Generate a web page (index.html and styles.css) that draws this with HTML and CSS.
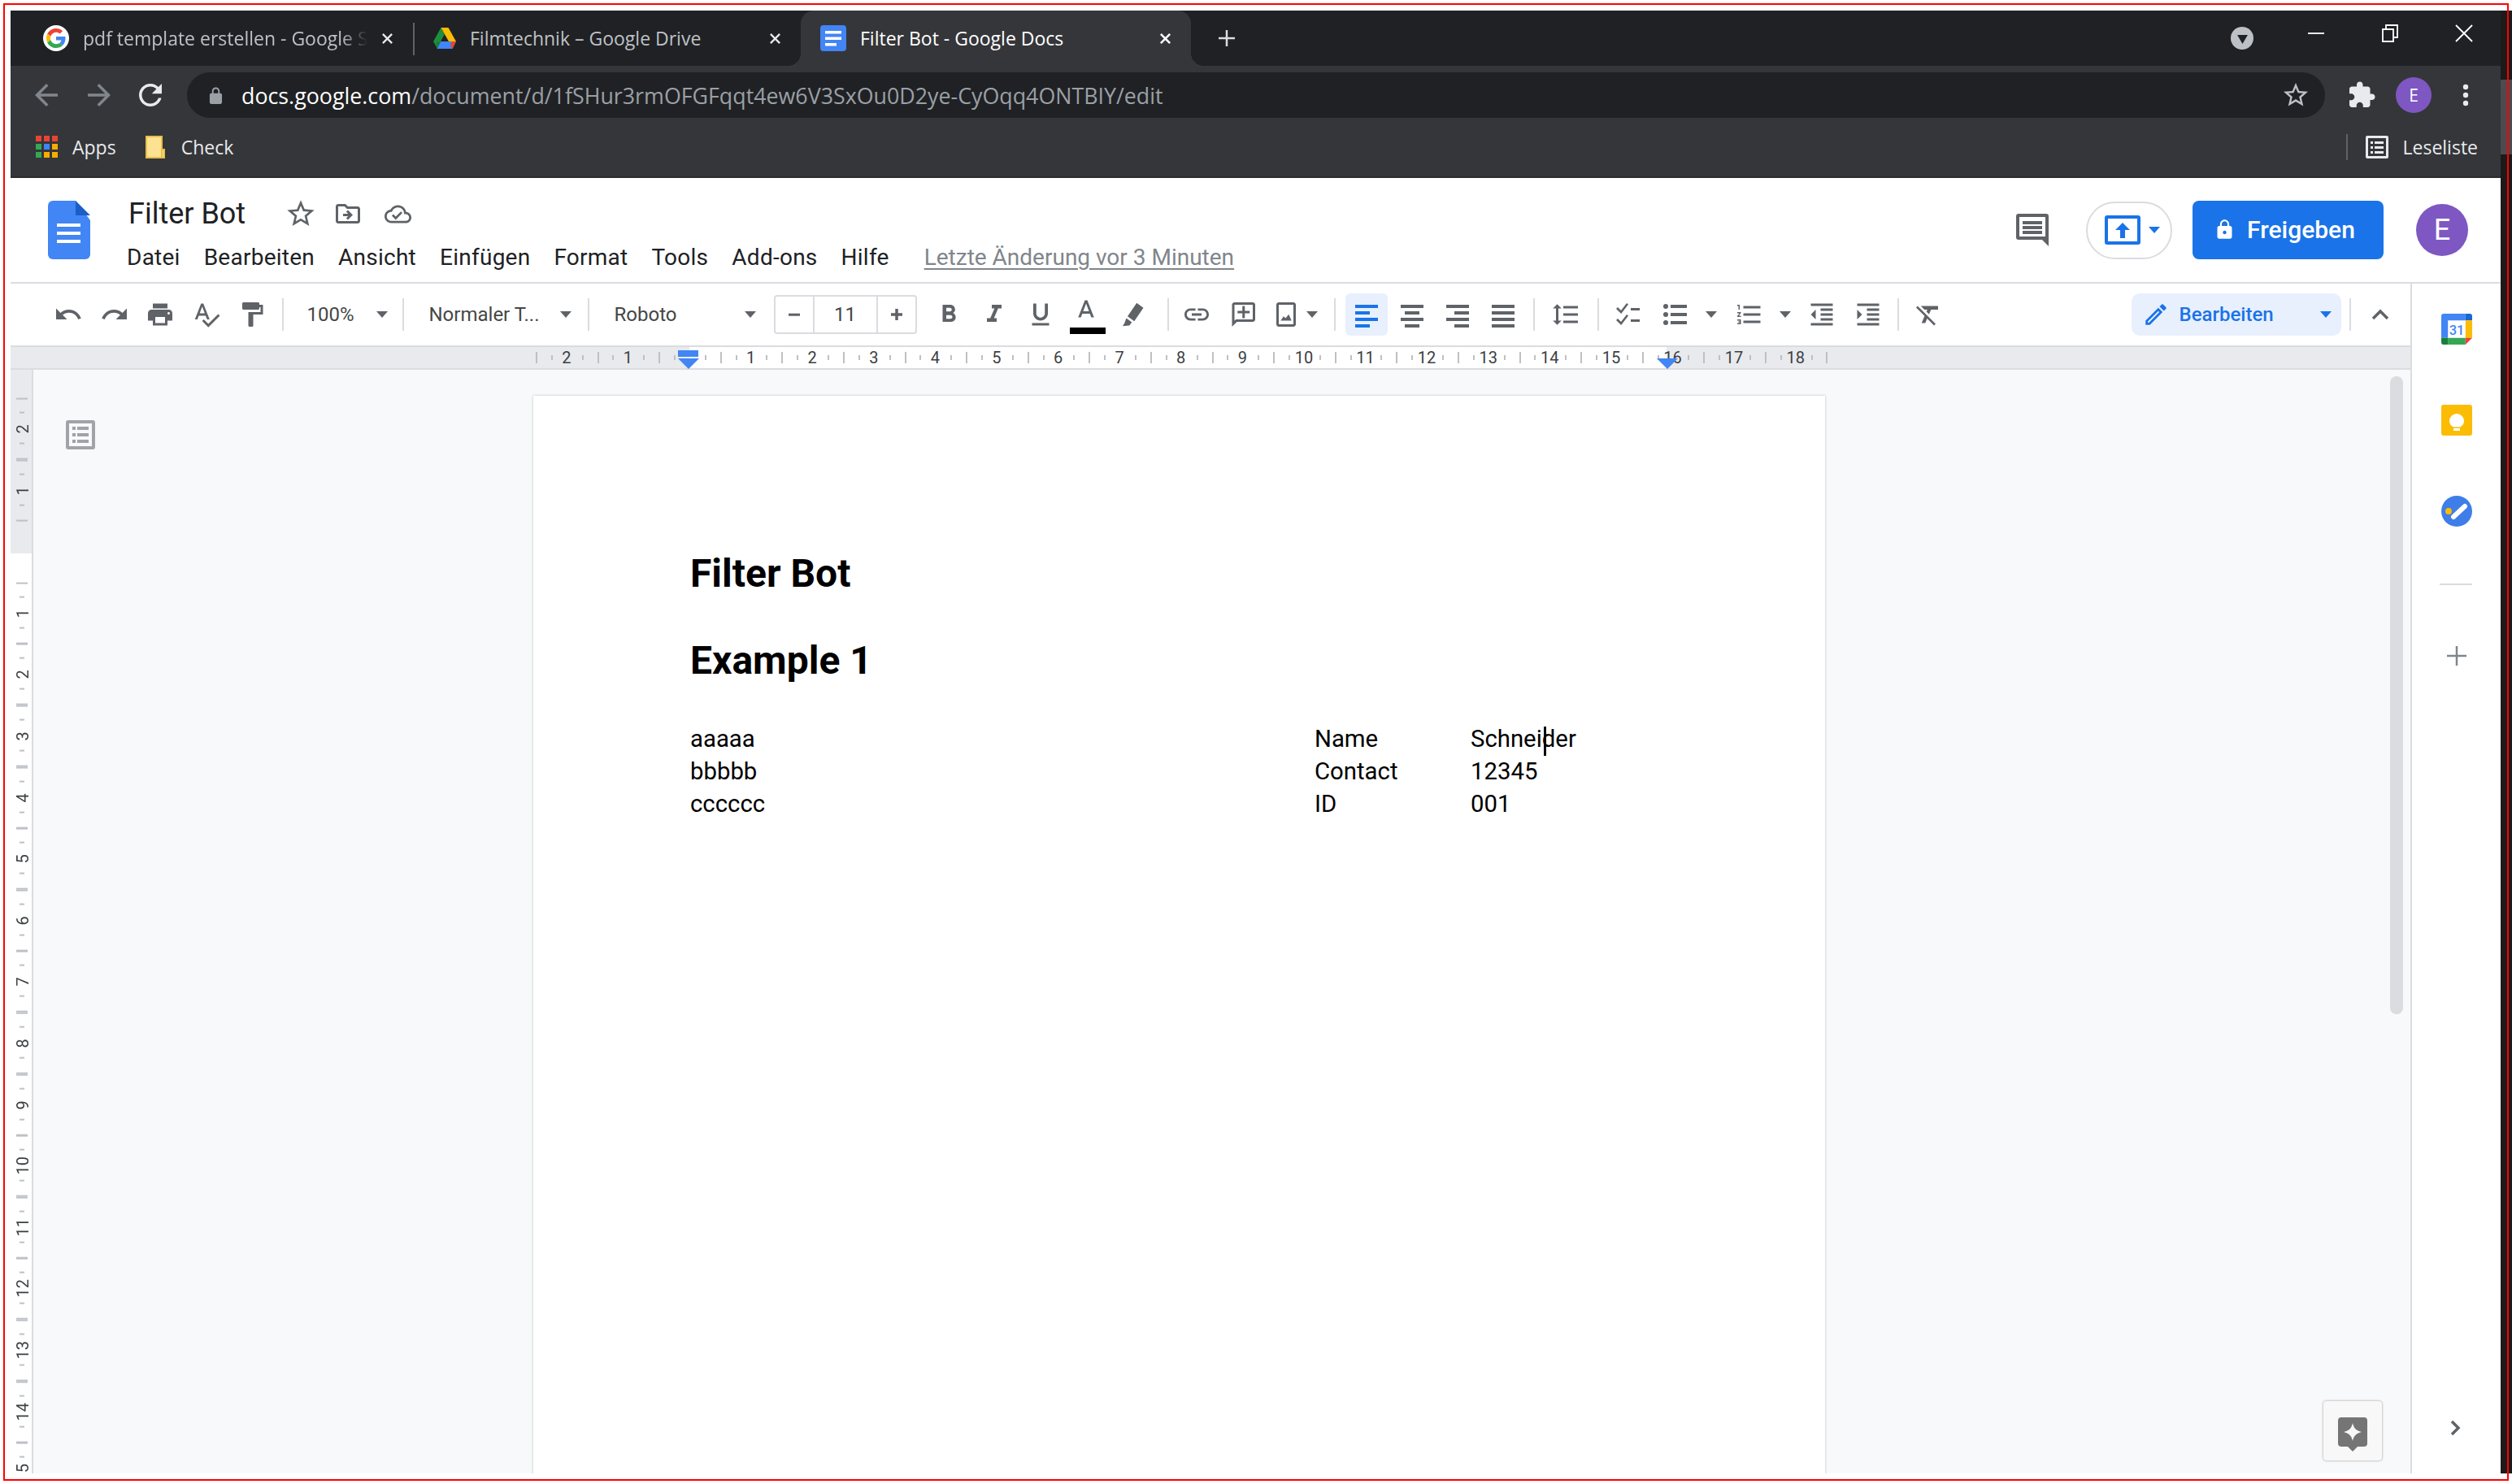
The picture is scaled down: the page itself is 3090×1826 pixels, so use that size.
FILE: index.html
```html
<!DOCTYPE html>
<html lang="en">
<head>
    <meta charset="UTF-8">
    <title>Filter Bot - Google Docs</title>
    <link rel="stylesheet" href="styles.css">
</head>
<body>
    <div class="window">
        <!-- browser tabs -->
        <div class="tabstrip">
            <div class="tab tab-one">
                <span class="favicon-round">
                    <svg class="fav-g" viewBox="0 0 48 48"><path fill="#EA4335" d="M24 9.5c3.54 0 6.71 1.22 9.21 3.6l6.85-6.85C35.9 2.38 30.47 0 24 0 14.62 0 6.51 5.38 2.56 13.22l7.98 6.19C12.43 13.72 17.74 9.5 24 9.5z"/><path fill="#4285F4" d="M46.98 24.55c0-1.57-.15-3.09-.38-4.55H24v9.02h12.94c-.58 2.96-2.26 5.48-4.78 7.18l7.73 6c4.51-4.18 7.09-10.36 7.09-17.65z"/><path fill="#FBBC05" d="M10.53 28.59c-.48-1.45-.76-2.99-.76-4.59s.27-3.14.76-4.59l-7.98-6.19C.92 16.46 0 20.12 0 24c0 3.88.92 7.54 2.56 10.78l7.97-6.19z"/><path fill="#34A853" d="M24 48c6.48 0 11.93-2.13 15.89-5.81l-7.73-6c-2.15 1.45-4.92 2.3-8.16 2.3-6.26 0-11.57-4.22-13.47-9.91l-7.98 6.19C6.51 42.62 14.62 48 24 48z"/></svg>
                </span>
                <span class="tab-title tab-title-fade">pdf template erstellen - Google S</span>
                <svg class="tab-x" viewBox="0 0 16 16"><path d="M2 2l12 12M14 2L2 14"/></svg>
            </div>
            <div class="tab tab-two">
                <svg class="fav-drive" viewBox="0 0 28 27"><path fill="#1e8e3e" d="M9.5 0L0 17l4.5 8L14 8z"/><path fill="#fbbc04" d="M9.5 0h9L28 17h-9z"/><path fill="#4285f4" d="M9 17h19l-4.5 9H4.5z"/><path fill="#ea4335" d="M23 17h5l-4.5 9-2.5-4z"/><path fill="#188038" d="M4.5 26L9 17H5l-2 4z"/></svg>
                <span class="tab-title">Filmtechnik – Google Drive</span>
                <svg class="tab-x" viewBox="0 0 16 16"><path d="M2 2l12 12M14 2L2 14"/></svg>
            </div>
            <div class="tab tab-active">
                <svg class="fav-docs" viewBox="0 0 32 32"><rect width="32" height="32" rx="4" fill="#4285f4"/><path fill="#fff" d="M6 7h20v3.5H6zM6 14.500h20V18H6zM6 22h14v3.500H6z"/></svg>
                <span class="tab-title">Filter Bot - Google Docs</span>
                <svg class="tab-x tab-x-active" viewBox="0 0 16 16"><path d="M2 2l12 12M14 2L2 14"/></svg>
            </div>
            <svg class="newtab" viewBox="0 0 24 24"><path d="M12 2v20M2 12h20"/></svg>
            <div class="win-controls">
                <span class="tabsearch"><svg viewBox="0 0 14 12"><path d="M0 0h14L7 12z"/></svg></span>
                <span class="winbtn"><svg viewBox="0 0 22 22"><path d="M1 11h20"/></svg></span>
                <span class="winbtn"><svg viewBox="0 0 22 22"><path d="M2 6h13v15H2zM6 6V1h14v15h-5"/></svg></span>
                <span class="winbtn"><svg viewBox="0 0 22 22"><path d="M1 1l20 20M21 1L1 21"/></svg></span>
            </div>
        </div>

        <!-- address bar -->
        <div class="navbar">
            <span class="navbtn nav-dim"><svg viewBox="0 0 24 24"><path d="M20 11H7.830l5.590-5.590L12 4l-8 8 8 8 1.410-1.410L7.830 13H20v-2z"/></svg></span>
            <span class="navbtn nav-dim"><svg viewBox="0 0 24 24"><path d="M12 4l-1.410 1.410L16.170 11H4v2h12.170l-5.580 5.590L12 20l8-8z"/></svg></span>
            <span class="navbtn nav-reload"><svg viewBox="0 0 24 24"><path d="M17.650 6.350C16.200 4.900 14.210 4 12 4c-4.420 0-7.990 3.580-7.990 8s3.570 8 7.990 8c3.730 0 6.840-2.550 7.730-6h-2.080c-.82 2.330-3.040 4-5.650 4-3.310 0-6-2.690-6-6s2.690-6 6-6c1.660 0 3.140.69 4.220 1.780L13 11h7V4l-2.350 2.350z"/></svg></span>
            <div class="omnibox">
                <svg class="omni-lock" viewBox="0 0 18 22"><path d="M15 8h-1V5.500C14 2.700 11.800.5 9 .5S4 2.700 4 5.500V8H3c-1.100 0-2 .9-2 2v10c0 1.100.9 2 2 2h12c1.100 0 2-.9 2-2V10c0-1.100-.9-2-2-2zM6 8V5.500C6 3.800 7.300 2.500 9 2.500s3 1.300 3 3V8H6z"/></svg>
                <span class="url"><span class="url-host">docs.google.com</span>/document/d/1fSHur3rmOFGFqqt4ew6V3SxOu0D2ye-CyOqq4ONTBIY/edit</span>
                <svg class="omni-star" viewBox="0 0 24 24"><path d="M22 9.240l-7.190-.62L12 2 9.190 8.630 2 9.240l5.460 4.730L5.820 21 12 17.270 18.180 21l-1.630-7.030L22 9.240zM12 15.400l-3.760 2.270 1-4.280-3.320-2.880 4.380-.38L12 6.100l1.710 4.040 4.380.38-3.320 2.880 1 4.280L12 15.400z"/></svg>
            </div>
            <div class="nav-right">
                <svg class="puzzle" viewBox="0 0 24 24"><path d="M20.500 11H19V7c0-1.100-.9-2-2-2h-4V3.500C13 2.120 11.880 1 10.500 1S8 2.120 8 3.500V5H4c-1.100 0-1.990.9-1.990 2v3.800H3.500c1.490 0 2.700 1.210 2.700 2.700s-1.210 2.700-2.700 2.700H2V20c0 1.100.9 2 2 2h3.800v-1.500c0-1.490 1.210-2.700 2.700-2.700 1.490 0 2.700 1.210 2.700 2.700V22H17c1.100 0 2-.9 2-2v-4h1.500c1.380 0 2.500-1.120 2.500-2.500S21.880 11 20.500 11z"/></svg>
                <span class="nav-avatar">E</span>
                <svg class="nav-dots" viewBox="0 0 8 28"><circle cx="4" cy="4" r="3.200"/><circle cx="4" cy="14" r="3.200"/><circle cx="4" cy="24" r="3.200"/></svg>
            </div>
        </div>

        <!-- bookmarks -->
        <div class="bookmarks">
            <svg class="apps-grid" viewBox="0 0 27 27">
                <rect width="7" height="7" fill="#ea4335"/><rect x="10" width="7" height="7" fill="#ea4335"/><rect x="20" width="7" height="7" fill="#ea4335"/>
                <rect y="10" width="7" height="7" fill="#34a853"/><rect x="10" y="10" width="7" height="7" fill="#4285f4"/><rect x="20" y="10" width="7" height="7" fill="#f9ab00"/>
                <rect y="20" width="7" height="7" fill="#34a853"/><rect x="10" y="20" width="7" height="7" fill="#f9ab00"/><rect x="20" y="20" width="7" height="7" fill="#f9ab00"/>
            </svg>
            <span class="bm-label bm-apps">Apps</span>
            <svg class="bm-folder" viewBox="0 0 24 28"><path fill="#fde293" stroke="#e8c04a" stroke-width="2" d="M1 1h19v26H1z"/><path fill="#fde293" stroke="#e8c04a" stroke-width="2" d="M20 17h3v10h-3z"/></svg>
            <span class="bm-label">Check</span>
            <span class="bm-sep"></span>
            <svg class="bm-list" viewBox="0 0 28 28"><path fill="#e8eaed" d="M2 0h24a2 2 0 0 1 2 2v24a2 2 0 0 1-2 2H2a2 2 0 0 1-2-2V2a2 2 0 0 1 2-2zm1 3v22h22V3zM6 7h3v3H6zm5 0h11v3H11zM6 13h3v3H6zm5 0h11v3H11zM6 19h3v3H6zm5 0h11v3H11z"/></svg>
            <span class="bm-label">Leseliste</span>
        </div>

        <!-- docs header -->
        <header class="docs-head">
            <svg class="docs-logo" viewBox="0 0 52 72"><path fill="#4285f4" d="M6 0h28l18 24v42a6 6 0 0 1-6 6H6a6 6 0 0 1-6-6V6a6 6 0 0 1 6-6z"/><path fill="#1a5fc8" d="M34 0l18 18v0H34z"/><path fill="#fff" d="M11 28h29v4H11zM11 38h29v4H11zM11 48h29v4H11z"/></svg>
            <div class="head-text">
                <div class="title-row">
                    <span class="doc-title">Filter Bot</span>
                    <svg class="title-icon star" viewBox="0 0 24 24"><path d="M22 9.240l-7.190-.62L12 2 9.190 8.630 2 9.240l5.460 4.730L5.820 21 12 17.270 18.180 21l-1.630-7.030L22 9.240zM12 15.400l-3.760 2.270 1-4.280-3.320-2.880 4.380-.38L12 6.100l1.710 4.040 4.380.38-3.320 2.880 1 4.280L12 15.400z"/></svg>
                    <svg class="title-icon folder" viewBox="0 0 24 24"><path d="M20 6h-8l-2-2H4c-1.100 0-2 .9-2 2v12c0 1.100.9 2 2 2h16c1.100 0 2-.9 2-2V8c0-1.100-.9-2-2-2zm0 12H4V6h5.170l2 2H20v10zm-8.010-9l-1.410 1.410L12.160 12H8v2h4.160l-1.590 1.590L11.990 17 16 13.010 11.990 9z"/></svg>
                    <svg class="title-icon cloud" viewBox="0 0 24 24"><path d="M19.350 10.040C18.670 6.590 15.640 4 12 4 9.110 4 6.600 5.640 5.350 8.040 2.340 8.360 0 10.910 0 14c0 3.310 2.690 6 6 6h13c2.760 0 5-2.240 5-5 0-2.640-2.050-4.780-4.650-4.960zM19 18H6c-2.210 0-4-1.790-4-4s1.790-4 4-4h.71C7.370 7.690 9.480 6 12 6c3.040 0 5.500 2.460 5.500 5.500v.5H19c1.660 0 3 1.340 3 3s-1.340 3-3 3zm-9-3.820l-2.090-2.090L6.500 13.500 10 17l6.010-6.010-1.410-1.410z"/></svg>
                </div>
                <nav class="menu">
                    <span>Datei</span><span>Bearbeiten</span><span>Ansicht</span><span>Einfügen</span><span>Format</span><span>Tools</span><span>Add-ons</span><span>Hilfe</span>
                    <span class="last-edit">Letzte Änderung vor 3 Minuten</span>
                </nav>
            </div>
            <div class="head-right">
                <svg class="comments" viewBox="0 0 40 40"><path d="M3 0h34a3 3 0 0 1 3 3v37l-8-8H3a3 3 0 0 1-3-3V3a3 3 0 0 1 3-3zm1 4v24h32V4zM8 9h24v4H8zM8 15h24v4H8zM8 21h24v4H8z" fill-rule="evenodd"/></svg>
                <span class="present">
                    <svg class="present-ic" viewBox="0 0 44 36"><path fill-rule="evenodd" d="M3 0h38a3 3 0 0 1 3 3v30a3 3 0 0 1-3 3H3a3 3 0 0 1-3-3V3a3 3 0 0 1 3-3zm1 4v28h36V4zM22 9l9 9h-6v10h-6V18h-6z"/></svg>
                    <span class="arrow arrow-blue"></span>
                </span>
                <span class="share">
                    <svg class="share-lock" viewBox="0 0 24 24"><path d="M18 8h-1V6c0-2.760-2.240-5-5-5S7 3.240 7 6v2H6c-1.100 0-2 .9-2 2v10c0 1.100.9 2 2 2h12c1.100 0 2-.9 2-2V10c0-1.100-.9-2-2-2zm-6 9c-1.100 0-2-.9-2-2s.9-2 2-2 2 .9 2 2-.9 2-2 2zm3.100-9H8.900V6c0-1.710 1.390-3.100 3.100-3.100 1.710 0 3.100 1.390 3.100 3.100v2z"/></svg>
                    Freigeben
                </span>
                <span class="head-avatar">E</span>
            </div>
        </header>

        <div class="docs-body">
            <div class="docs-main">
                <!-- format toolbar -->
                <div class="toolbar">
                    <span class="tool"><svg viewBox="0 0 24 24"><path d="M12.500 8c-2.650 0-5.050.99-6.900 2.600L2 7v9h9l-3.620-3.620c1.390-1.160 3.160-1.880 5.120-1.880 3.540 0 6.550 2.310 7.600 5.500l2.370-.78C21.080 11.030 17.150 8 12.500 8z"/></svg></span>
                    <span class="tool"><svg viewBox="0 0 24 24"><path d="M18.400 10.600C16.550 8.990 14.150 8 11.500 8c-4.650 0-8.580 3.030-9.960 7.220L3.900 16c1.050-3.190 4.050-5.500 7.600-5.500 1.950 0 3.730.72 5.120 1.880L13 16h9V7l-3.600 3.600z"/></svg></span>
                    <span class="tool"><svg viewBox="0 0 24 24"><path d="M19 8H5c-1.660 0-3 1.340-3 3v6h4v4h12v-4h4v-6c0-1.660-1.340-3-3-3zm-3 11H8v-5h8v5zm3-7c-.55 0-1-.45-1-1s.45-1 1-1 1 .45 1 1-.45 1-1 1zm-1-9H6v4h12V3z"/></svg></span>
                    <span class="tool"><svg viewBox="0 0 24 24"><path d="M12.450 16h2.090L9.430 3H7.570L2.460 16h2.090l1.120-3h5.640l1.140 3zm-6.020-5L8.500 5.480 10.570 11H6.430zm15.160.59l-8.090 8.090L9.830 16l-1.410 1.410 5.090 5.090L23 13l-1.410-1.410z"/></svg></span>
                    <span class="tool"><svg viewBox="0 0 24 24"><path d="M18 4V3c0-.55-.45-1-1-1H5c-.55 0-1 .45-1 1v4c0 .55.45 1 1 1h12c.55 0 1-.45 1-1V6h1v4H9v11c0 .55.45 1 1 1h2c.55 0 1-.45 1-1v-9h8V4h-3z"/></svg></span>
                    <span class="sep sep-f"></span>
                    <span class="pick pick-zoom"><span>100%</span><span class="arrow"></span></span>
                    <span class="sep"></span>
                    <span class="pick pick-style"><span>Normaler T...</span><span class="arrow"></span></span>
                    <span class="sep"></span>
                    <span class="pick pick-font"><span>Roboto</span><span class="arrow"></span></span>
                    <span class="sizebox"><span class="size-btn"><svg viewBox="0 0 16 16"><path d="M0 6.500h16v3.500H0z"/></svg></span><span class="size-val">11</span><span class="size-btn"><svg viewBox="0 0 16 16"><path d="M6 0h4v6h6v4h-6v6H6v-6H0V6h6z"/></svg></span></span>
                    <span class="tool tool-b"><svg viewBox="0 0 24 24"><path d="M15.600 10.790c.97-.67 1.650-1.770 1.650-2.790 0-2.260-1.750-4-4-4H7v14h7.040c2.090 0 3.710-1.700 3.710-3.790 0-1.520-.86-2.820-2.150-3.420zM10 6.500h3c.83 0 1.500.67 1.500 1.500s-.67 1.500-1.500 1.500h-3v-3zm3.500 9H10v-3h3.500c.83 0 1.500.67 1.500 1.500s-.67 1.500-1.500 1.500z"/></svg></span>
                    <span class="tool"><svg viewBox="0 0 24 24"><path d="M10 4v3h2.210l-3.420 8H6v3h8v-3h-2.210l3.420-8H18V4z"/></svg></span>
                    <span class="tool"><svg viewBox="0 0 24 24"><path d="M12 17c3.310 0 6-2.690 6-6V3h-2.500v8c0 1.930-1.570 3.500-3.500 3.500S8.500 12.930 8.500 11V3H6v8c0 3.310 2.690 6 6 6zm-7 2v2h14v-2H5z"/></svg></span>
                    <span class="tool tool-color"><svg viewBox="0 0 24 24"><path d="M11 1L5.500 15h2.250l1.120-3h6.250l1.120 3h2.250L13 1h-2zm-1.380 9L12 3.670 14.380 10H9.620z"/></svg><span class="colorbar"></span></span>
                    <span class="tool"><svg viewBox="0 0 24 24"><path d="M15.500 2.500l5.500 4-7.500 11-5.500-4zM7 15l4.500 3.300-2 2.700-5.500.5 1.500-2.500z"/></svg></span>
                    <span class="sep sep-b"></span>
                    <span class="tool"><svg viewBox="0 0 24 24"><path d="M3.900 12c0-1.710 1.390-3.100 3.100-3.100h4V7H7c-2.760 0-5 2.240-5 5s2.240 5 5 5h4v-1.900H7c-1.710 0-3.100-1.390-3.100-3.100zM8 13h8v-2H8v2zm9-6h-4v1.900h4c1.710 0 3.100 1.390 3.100 3.100s-1.390 3.100-3.100 3.100h-4V17h4c2.760 0 5-2.240 5-5s-2.240-5-5-5z"/></svg></span>
                    <span class="tool"><svg viewBox="0 0 24 24"><path d="M20 2H5c-1.100 0-2 .9-2 2v18l4-4h13c1.100 0 2-.9 2-2V4c0-1.100-.9-2-2-2zm0 14H6.170L5 17.170V4h15v12zM13.500 5h-2v4h-4v2h4v4h2v-4h4V9h-4z"/></svg></span>
                    <span class="tool tool-drop"><svg viewBox="0 0 24 24"><path d="M18 4v16H6V4h12m0-2H6c-1.100 0-2 .9-2 2v16c0 1.100.9 2 2 2h12c1.100 0 2-.9 2-2V4c0-1.100-.9-2-2-2zm-3.860 9.860l-2.500 3.200L10 13.500 7.500 17h9z"/></svg><span class="arrow"></span></span>
                    <span class="sep sep-a"></span>
                    <span class="tool tool-on"><svg viewBox="0 0 36 36"><path d="M4 6h28v4H4zM4 14h18v4H4zM4 22h28v4H4zM4 30h18v4H4z"/></svg></span>
                    <span class="tool tool-56"><svg viewBox="0 0 36 36"><path d="M4 6h28v4H4zM9 14h18v4H9zM4 22h28v4H4zM9 30h18v4H9z"/></svg></span>
                    <span class="tool tool-56"><svg viewBox="0 0 36 36"><path d="M4 6h28v4H4zM14 14h18v4H14zM4 22h28v4H4zM14 30h18v4H14z"/></svg></span>
                    <span class="tool tool-56"><svg viewBox="0 0 36 36"><path d="M4 6h28v4H4zM4 14h28v4H4zM4 22h28v4H4zM4 30h28v4H4z"/></svg></span>
                    <span class="sep sep-g"></span>
                    <span class="tool"><svg viewBox="0 0 24 24"><path d="M6 7h2.500L5 3.500 1.500 7H4v10H1.500L5 20.500 8.500 17H6V7zm4-2v2h12V5H10zm0 14h12v-2H10v2zm0-6h12v-2H10v2z"/></svg></span>
                    <span class="sep sep-h"></span>
                    <span class="tool"><svg viewBox="0 0 36 36"><path d="M5 9l4 4 7-9 2 1.500L9.200 17 3 11zM5 23l4 4 7-9 2 1.500L9.200 31 3 25zM21 10h11v3H21zM21 24h11v3H21z"/></svg></span>
                    <span class="tool tool-drop tool-list"><svg viewBox="0 0 36 36"><circle cx="6" cy="8" r="3"/><circle cx="6" cy="18" r="3"/><circle cx="6" cy="28" r="3"/><path d="M12 6h20v4H12zM12 16h20v4H12zM12 26h20v4H12z"/></svg><span class="arrow"></span></span>
                    <span class="tool tool-drop tool-list tool-num"><svg viewBox="0 0 24 24"><path d="M2 17h2v.5H3v1h1v.5H2v1h3v-4H2v1zm1-9h1V4H2v1h1v3zm-1 3h1.800L2 13.100v.9h3v-1H3.200L5 10.900V10H2v1zm5-6v2h14V5H7zm0 14h14v-2H7v2zm0-6h14v-2H7v2z"/></svg><span class="arrow"></span></span>
                    <span class="tool tool-outdent"><svg viewBox="0 0 24 24"><path d="M11 17h10v-2H11v2zm-8-5l4 4V8l-4 4zm0 9h18v-2H3v2zM3 3v2h18V3H3zm8 6h10V7H11v2zm0 4h10v-2H11v2z"/></svg></span>
                    <span class="tool"><svg viewBox="0 0 24 24"><path d="M3 21h18v-2H3v2zM3 8v8l4-4-4-4zm8 9h10v-2H11v2zM3 3v2h18V3H3zm8 6h10V7H11v2zm0 4h10v-2H11v2z"/></svg></span>
                    <span class="sep sep-c"></span>
                    <span class="tool"><svg viewBox="0 0 24 24"><path d="M3.270 5L2 6.270l6.970 6.970L6.500 19h3l1.570-3.660L16.730 21 18 19.730 3.550 5.270 3.270 5zM6 5v.18L8.820 8h2.400l-.72 1.680 2.100 2.100L14.210 8H20V5H6z"/></svg></span>
                    <span class="mode">
                        <svg viewBox="0 0 24 24"><path d="M14.060 9.020l.92.92L5.920 19H5v-.92l9.060-9.060M17.660 3c-.25 0-.51.1-.7.29l-1.830 1.830 3.750 3.750 1.830-1.830c.39-.39.39-1.020 0-1.410l-2.340-2.340c-.2-.2-.45-.29-.71-.29zm-3.600 3.190L3 17.250V21h3.750L17.810 9.940l-3.750-3.750z"/></svg>
                        <span class="mode-label">Bearbeiten</span>
                        <span class="arrow arrow-blue"></span>
                    </span>
                    <span class="sep sep-d"></span>
                    <svg class="collapse" viewBox="0 0 24 14"><path d="M3 12l9-9 9 9"/></svg>
                </div>

                <!-- top ruler -->
                <div class="ruler-h">
                    <span class="rh">2</span><span class="rh">1</span><span class="rh"></span><span class="rh">1</span><span class="rh">2</span><span class="rh">3</span><span class="rh">4</span><span class="rh">5</span><span class="rh">6</span><span class="rh">7</span><span class="rh">8</span><span class="rh">9</span><span class="rh">10</span><span class="rh">11</span><span class="rh">12</span><span class="rh">13</span><span class="rh">14</span><span class="rh">15</span><span class="rh">16</span><span class="rh">17</span><span class="rh">18</span><span class="rh-end"></span>
                    <span class="indent-rect"></span>
                    <span class="indent-tri indent-left"></span>
                    <span class="indent-tri indent-right"></span>
                </div>

                <div class="workspace">
                    <div class="ruler-v">
                        <span class="rv">2</span><span class="rv">1</span><span class="rv"></span><span class="rv">1</span><span class="rv">2</span><span class="rv">3</span><span class="rv">4</span><span class="rv">5</span><span class="rv">6</span><span class="rv">7</span><span class="rv">8</span><span class="rv">9</span><span class="rv">10</span><span class="rv">11</span><span class="rv">12</span><span class="rv">13</span><span class="rv">14</span><span class="rv">15</span>
                    </div>
                    <div class="canvas">
                        <svg class="outline-ic" viewBox="0 0 36 36"><path fill-rule="evenodd" d="M3 0h30a3 3 0 0 1 3 3v30a3 3 0 0 1-3 3H3a3 3 0 0 1-3-3V3a3 3 0 0 1 3-3zm1 4v28h28V4zM8 8h4v4H8zm6 0h14v4H14zM8 16h4v4H8zm6 0h14v4H14zM8 24h4v4H8zm6 0h14v4H14z"/></svg>
                        <div class="page">
                            <h1 class="doc-h">Filter Bot</h1>
                            <h1 class="doc-h doc-h2">Example 1</h1>
                            <div class="doc-grid">
                                <span>aaaaa</span><span>Name</span><span class="cursor-cell">Schnei<i class="cursor"></i>der</span>
                                <span>bbbbb</span><span>Contact</span><span>12345</span>
                                <span>cccccc</span><span>ID</span><span>001</span>
                            </div>
                        </div>
                    </div>
                    <div class="scrollthumb"></div>
                    <div class="tip-btn">
                        <svg viewBox="0 0 36 42"><path fill-rule="evenodd" d="M4 0h28a4 4 0 0 1 4 4v28a4 4 0 0 1-4 4h-8l-6 6-6-6H4a4 4 0 0 1-4-4V4a4 4 0 0 1 4-4zM18 7c1.500 6.500 4.500 9.500 11 11-6.500 1.500-9.500 4.500-11 11-1.500-6.500-4.500-9.500-11-11 6.500-1.500 9.500-4.500 11-11z"/></svg>
                    </div>
                </div>
            </div>

            <!-- add-ons side panel -->
            <aside class="sidepanel">
                <svg class="side-ic" viewBox="0 0 37 37"><path fill="#4285f4" d="M3 0h26v8H8v21H0V3a3 3 0 0 1 3-3z"/><path fill="#1967d2" d="M29 0h5a3 3 0 0 1 3 3v5h-8z"/><path fill="#fbbc04" d="M29 8h8v21h-8z"/><path fill="#34a853" d="M8 29h21v8H8z"/><path fill="#188038" d="M0 29h8v8H3a3 3 0 0 1-3-3z"/><path fill="#ea4335" d="M29 29h8l-8 8z"/><text x="18.500" y="25" class="cal-num">31</text></svg>
                <svg class="side-ic" viewBox="0 0 38 38"><rect width="38" height="38" rx="3" fill="#fbbc04"/><path fill="#fff" d="M15 27.500c-3-1.500-5-4-5-7.500a9 9 0 0 1 18 0c0 3.500-2 6-5 7.500zM15 29h8v3h-8z"/></svg>
                <svg class="side-ic" viewBox="0 0 38 38"><circle cx="19" cy="19" r="19" fill="#3f7ee8"/><circle cx="9" cy="19" r="4" fill="#fbbc04"/><path d="M15 26l14-13" stroke="#fff" stroke-width="6" stroke-linecap="round"/></svg>
                <span class="side-rule"></span>
                <svg class="side-plus" viewBox="0 0 24 24"><path d="M12 0v24M0 12h24"/></svg>
                <svg class="side-chev" viewBox="0 0 14 20"><path d="M2 2l8 8-8 8"/></svg>
            </aside>
        </div>
    </div>
    <div class="edge"><span class="edge-thumb"></span></div>
    <div class="redframe"></div>
</body>
</html>
```

FILE: styles.css
```css
/* page frame */
html, body {
    margin: 0;
    height: 1826px;
    overflow: hidden;
    background: #fff;
}

body {
    display: flex;
    padding: 13px 0 13px 13px;
    box-sizing: border-box;
    font-family: Roboto, sans-serif;
    position: relative;
}

.window {
    width: 3063px;
    display: flex;
    flex-direction: column;
    overflow: hidden;
}

.edge {
    flex: 1;
    background: #1b1b1b;
    position: relative;
}

.edge-thumb {
    position: absolute;
    top: 85px;
    left: 0;
    width: 100%;
    height: 92px;
    background: #4b4c4f;
}

.redframe {
    position: absolute;
    left: 4px;
    top: 4px;
    right: 4px;
    bottom: 4px;
    border: 2px solid #f00;
    pointer-events: none;
}

/* chrome tabs */
.tabstrip {
    height: 68px;
    flex: none;
    display: flex;
    align-items: stretch;
    background: #202124;
    font-family: "Open Sans", sans-serif;
    font-size: 23px;
    color: #bdc1c6;
}

.tab {
    display: flex;
    align-items: center;
    position: relative;
    box-sizing: border-box;
}

.tab-one {
    width: 495px;
    padding-left: 40px;
}

.tab-two {
    width: 477px;
    padding-left: 25px;
}

.tab-two::before {
    content: "";
    position: absolute;
    left: 0;
    top: 15px;
    width: 2px;
    height: 40px;
    background: #5f6368;
}

.tab-active {
    width: 480px;
    padding-left: 24px;
    background: #35363a;
    border-radius: 16px 16px 0 0;
    color: #fff;
}

.tab-active::before, .tab-active::after {
    content: "";
    position: absolute;
    bottom: 0;
    width: 16px;
    height: 16px;
}

.tab-active::before {
    left: -16px;
    background: radial-gradient(circle at 0 0, transparent 16px, #35363a 16px);
}

.tab-active::after {
    right: -16px;
    background: radial-gradient(circle at 100% 0, transparent 16px, #35363a 16px);
}

.favicon-round {
    width: 32px;
    height: 32px;
    border-radius: 50%;
    background: #fff;
    display: flex;
    align-items: center;
    justify-content: center;
    flex: none;
}

.fav-g {
    width: 24px;
    height: 24px;
}

.fav-drive {
    width: 28px;
    height: 27px;
    flex: none;
}

.fav-docs {
    width: 32px;
    height: 32px;
    flex: none;
}

.tab-title {
    white-space: nowrap;
    overflow: hidden;
    margin-left: 17px;
    line-height: 32px;
}

.tab-title-fade {
    width: 350px;
    -webkit-mask-image: linear-gradient(90deg, #000 318px, transparent 350px);
    mask-image: linear-gradient(90deg, #000 318px, transparent 350px);
}

.tab-x {
    position: absolute;
    right: 24px;
    width: 15px;
    height: 15px;
    fill: none;
    stroke: #e8eaed;
    stroke-width: 2.4;
}

.tab-x-active {
    stroke: #fff;
    stroke-width: 2.800;
}

.newtab {
    width: 24px;
    height: 24px;
    align-self: center;
    margin-left: 32px;
    fill: none;
    stroke: #dadce0;
    stroke-width: 2.500;
}

.win-controls {
    margin-left: auto;
    display: flex;
    align-items: center;
}

.tabsearch {
    width: 28px;
    height: 28px;
    border-radius: 50%;
    background: #bdc1c6;
    display: flex;
    align-items: center;
    justify-content: center;
    margin-right: 31px;
}

.tabsearch svg {
    width: 13px;
    height: 11px;
    margin-top: 2px;
    fill: #202124;
}

.winbtn {
    width: 91px;
    height: 68px;
    display: flex;
    align-items: center;
    justify-content: center;
}

.winbtn svg {
    width: 22px;
    height: 22px;
    fill: none;
    stroke: #fff;
    stroke-width: 1.800;
    margin-top: -12px;
}

/* address bar */
.navbar {
    height: 69px;
    flex: none;
    box-sizing: border-box;
    display: flex;
    padding: 8px 0 5px 11px;
    background: #35363a;
}

.navbtn {
    width: 65px;
    display: flex;
    align-items: center;
    justify-content: center;
}

.navbtn svg {
    width: 42px;
    height: 42px;
    fill: #e8eaed;
}

.nav-dim svg {
    fill: #80868b;
}

.nav-reload svg {
    margin-left: -3px;
}

.omnibox {
    flex: 1;
    margin-left: 11px;
    background: #202124;
    border-radius: 28px;
    display: flex;
    align-items: center;
    padding-left: 27px;
    padding-right: 18px;
}

.omni-lock {
    width: 17px;
    height: 21px;
    fill: #9aa0a6;
    flex: none;
}

.url {
    margin-left: 23px;
    font-family: "Open Sans", sans-serif;
    font-size: 26.800px;
    color: #9aa0a6;
    white-space: nowrap;
}

.url-host {
    color: #fff;
}

.omni-star {
    margin-left: auto;
    width: 36px;
    height: 36px;
    fill: #bdc1c6;
}

.nav-right {
    width: 216px;
    flex: none;
    display: flex;
    align-items: center;
}

.puzzle {
    width: 36px;
    height: 36px;
    fill: #e8eaed;
    margin-left: 27px;
}

.nav-avatar {
    width: 44px;
    height: 44px;
    border-radius: 50%;
    background: #7e57c2;
    color: #fff;
    font-family: "Open Sans", sans-serif;
    font-size: 21px;
    display: flex;
    align-items: center;
    justify-content: center;
    margin-left: 24px;
}

.nav-dots {
    width: 8px;
    height: 28px;
    fill: #e8eaed;
    margin-left: 38px;
}

/* bookmarks bar */
.bookmarks {
    height: 69px;
    flex: none;
    box-sizing: border-box;
    display: flex;
    align-items: center;
    padding: 0 0 6px 31px;
    background: #35363a;
    border-bottom: 2px solid #2a2b2e;
}

.apps-grid {
    width: 27px;
    height: 27px;
    flex: none;
}

.bm-label {
    font-family: "Open Sans", sans-serif;
    font-size: 23px;
    color: #e8eaed;
    margin-left: 18px;
    white-space: nowrap;
}

.bm-apps {
    margin-right: 36px;
}

.bm-folder {
    width: 24px;
    height: 28px;
    flex: none;
    margin-right: 2px;
}

.bm-sep {
    width: 2px;
    height: 32px;
    background: #5f6368;
    margin-left: auto;
}

.bm-list {
    width: 28px;
    height: 28px;
    margin-left: 22px;
    flex: none;
}

.bookmarks .bm-label:last-child {
    margin-right: 28px;
}

/* docs header */
.docs-head {
    height: 130px;
    flex: none;
    box-sizing: border-box;
    display: flex;
    background: #fff;
    border-bottom: 2px solid #dadce0;
    padding: 28px 0 0 46px;
}

.docs-logo {
    width: 52px;
    height: 72px;
    flex: none;
}

.head-text {
    margin-left: 47px;
    margin-top: -2px;
}

.title-row {
    display: flex;
    align-items: center;
    height: 36px;
}

.doc-title {
    font-size: 36px;
    line-height: 36px;
    color: #202124;
    width: 192px;
}

.title-icon {
    fill: #5f6368;
    flex: none;
}

.star {
    width: 40px;
    height: 40px;
}

.folder {
    width: 36px;
    height: 36px;
    margin-left: 20px;
}

.cloud {
    width: 33px;
    height: 33px;
    margin-left: 27px;
}

.menu {
    display: flex;
    gap: 29px;
    margin-top: 18px;
    margin-left: -2px;
    font-size: 28px;
    line-height: 36px;
    letter-spacing: 0.25px;
    color: #202124;
    white-space: nowrap;
}

.last-edit {
    margin-left: 14px;
    color: #80868b;
    letter-spacing: 0;
    text-decoration: underline;
    text-underline-offset: 4px;
}

.head-right {
    margin-left: auto;
    display: flex;
    align-items: center;
    height: 72px;
}

.comments {
    width: 40px;
    height: 40px;
    fill: #5f6368;
}

.present {
    width: 106px;
    height: 71px;
    box-sizing: border-box;
    border: 2px solid #dadce0;
    border-radius: 36px;
    margin-left: 46px;
    display: flex;
    align-items: center;
    padding-left: 21px;
}

.present-ic {
    width: 44px;
    height: 36px;
    fill: #1a73e8;
}

.present .arrow {
    margin-left: 10px;
}

.share {
    width: 235px;
    height: 72px;
    box-sizing: border-box;
    margin-left: 25px;
    padding: 0 0 2px 26px;
    border-radius: 8px;
    background: #1a73e8;
    color: #fff;
    font-size: 30px;
    font-weight: 500;
    display: flex;
    align-items: center;
    gap: 14px;
}

.share-lock {
    width: 27px;
    height: 27px;
    fill: #fff;
}

.head-avatar {
    width: 64px;
    height: 64px;
    border-radius: 50%;
    background: #7e57c2;
    color: #fff;
    font-size: 36px;
    display: flex;
    align-items: center;
    justify-content: center;
    margin-left: 40px;
    margin-right: 40px;
}

/* body under header */
.docs-body {
    flex: 1;
    display: flex;
    min-height: 0;
}

.docs-main {
    flex: 1;
    min-width: 0;
    display: flex;
    flex-direction: column;
}

/* format toolbar */
.toolbar {
    height: 78px;
    flex: none;
    box-sizing: border-box;
    display: flex;
    align-items: center;
    padding-left: 43px;
    background: #fff;
    border-bottom: 2px solid #dadce0;
}

.tool {
    width: 56.500px;
    height: 52px;
    flex: none;
    display: flex;
    align-items: center;
    justify-content: center;
    position: relative;
}

.tool svg {
    width: 36px;
    height: 36px;
    fill: #5f6368;
    flex: none;
}

.tool-56 {
    width: 56px;
}

.tool-b {
    margin-left: 11px;
}

.tool-on {
    width: 52px;
    margin: 0 2px;
    background: #e8f0fe;
    border-radius: 6px;
}

.tool-on svg {
    fill: #1a73e8;
}

.tool-drop {
    width: 76px;
    justify-content: flex-start;
    padding-left: 7px;
    box-sizing: border-box;
}

.tool-drop .arrow {
    margin-left: 7px;
}

.tool-list {
    width: 90px;
    padding-left: 11.500px;
}

.tool-num {
    padding-left: 12.500px;
}

.tool-list .arrow {
    margin-left: 19px;
}

.tool-outdent {
    margin-left: 2px;
}

.tool-color svg {
    margin-top: -3px;
}

.colorbar {
    position: absolute;
    left: 8px;
    bottom: 2px;
    width: 44px;
    height: 8px;
    background: #000;
}

.sep {
    width: 2px;
    height: 40px;
    flex: none;
    background: #dadce0;
}

.sep-a {
    margin: 0 10px 0 8px;
}

.sep-b {
    margin: 0 6px 0 15px;
}

.sep-c {
    margin: 0 8px 0 8px;
}

.sep-d {
    margin: 0 24px 0 10px;
}

.sep-f {
    margin-left: 8px;
}

.sep-g {
    margin: 0 10px 0 9px;
}

.sep-h {
    margin: 0 8px 0 10px;
}

.arrow {
    width: 0;
    height: 0;
    flex: none;
    border-left: 7px solid transparent;
    border-right: 7px solid transparent;
    border-top: 8px solid #5f6368;
}

.arrow-blue {
    border-top-color: #1a73e8;
}

.pick {
    display: flex;
    align-items: center;
    justify-content: space-between;
    box-sizing: border-box;
    flex: none;
    height: 52px;
    font-size: 24px;
    color: #444746;
    white-space: nowrap;
}

.pick-zoom {
    width: 146px;
    padding: 0 18px 0 29px;
}

.pick-style {
    width: 226px;
    padding: 0 20px 0 31px;
}

.pick-font {
    width: 222px;
    margin-right: 5px;
    padding: 0 17px 0 31px;
}

.sizebox {
    width: 176px;
    height: 48px;
    flex: none;
    box-sizing: border-box;
    display: flex;
    border: 2px solid #dadce0;
    border-radius: 4px;
    font-size: 24px;
    color: #444746;
}

.size-btn {
    width: 46px;
    display: flex;
    align-items: center;
    justify-content: center;
}

.size-btn svg {
    width: 14px;
    height: 14px;
    fill: #5f6368;
}

.size-val {
    flex: 1;
    display: flex;
    align-items: center;
    justify-content: center;
    border-left: 2px solid #dadce0;
    border-right: 2px solid #dadce0;
}

.mode {
    width: 258px;
    height: 52px;
    flex: none;
    box-sizing: border-box;
    margin-left: 221px;
    padding: 0 12px 0 13px;
    display: flex;
    align-items: center;
    background: #e8f0fe;
    border-radius: 10px;
    font-size: 24px;
    font-weight: 500;
    color: #1a73e8;
}

.mode svg {
    width: 34px;
    height: 34px;
    fill: #1a73e8;
}

.mode-label {
    margin-left: 12px;
}

.mode .arrow {
    margin-left: auto;
}

.collapse {
    width: 24px;
    height: 14px;
    fill: none;
    stroke: #5f6368;
    stroke-width: 3.500;
}

/* horizontal ruler */
.ruler-h {
    height: 28px;
    flex: none;
    box-sizing: border-box;
    display: flex;
    padding-left: 646px;
    position: relative;
    border-bottom: 2px solid #dadce0;
    background: linear-gradient(90deg, #e8eaed 835px, #fff 835px, #fff 2037px, #e8eaed 2037px);
}

.rh {
    width: 75.600px;
    flex: none;
    display: flex;
    align-items: center;
    justify-content: center;
    font-size: 20px;
    color: #3c4043;
    background:
        linear-gradient(#bdc1c6, #bdc1c6) 0 6px / 2px 14px no-repeat,
        linear-gradient(#bdc1c6, #bdc1c6) 18.900px 10px / 2px 6px no-repeat,
        linear-gradient(#bdc1c6, #bdc1c6) 56.700px 10px / 2px 6px no-repeat;
}

.rh-end {
    width: 2px;
    height: 14px;
    margin-top: 6px;
    background: #bdc1c6;
}

.indent-rect {
    position: absolute;
    left: 821px;
    top: 4px;
    width: 25px;
    height: 8px;
    background: #4285f4;
}

.indent-tri {
    position: absolute;
    top: 14px;
    width: 0;
    height: 0;
    border-left: 13px solid transparent;
    border-right: 13px solid transparent;
    border-top: 13px solid #4285f4;
}

.indent-left {
    left: 821px;
}

.indent-right {
    left: 2025px;
}

/* workspace */
.workspace {
    flex: 1;
    min-height: 0;
    display: flex;
    position: relative;
    background: #f8f9fa;
}

.ruler-v {
    width: 28px;
    flex: none;
    box-sizing: border-box;
    border-right: 2px solid #dadce0;
    padding-top: 35px;
    overflow: hidden;
    background: linear-gradient(#e8eaed 226px, #fff 226px);
}

/* numbers read bottom to top, so the whole cell is turned */
.rv {
    height: 75.600px;
    display: flex;
    align-items: center;
    justify-content: center;
    padding-right: 3px;
    box-sizing: border-box;
    writing-mode: vertical-rl;
    transform: rotate(180deg);
    font-size: 20px;
    color: #3c4043;
    background:
        linear-gradient(#bdc1c6, #bdc1c6) 6px 0 / 14px 2px no-repeat,
        linear-gradient(#bdc1c6, #bdc1c6) 6px 100% / 14px 2px no-repeat,
        linear-gradient(#bdc1c6, #bdc1c6) 10px 18.900px / 6px 2px no-repeat,
        linear-gradient(#bdc1c6, #bdc1c6) 10px 56.700px / 6px 2px no-repeat;
}

.canvas {
    flex: 1;
    min-width: 0;
    overflow: hidden;
    display: flex;
    align-items: flex-start;
    padding: 32px 0 0 40px;
}

.outline-ic {
    width: 36px;
    height: 36px;
    flex: none;
    margin-top: 30px;
    fill: #a0a3a8;
}

.page {
    width: 1589px;
    height: 1500px;
    flex: none;
    box-sizing: border-box;
    margin-left: 539px;
    padding: 192px 0 0 193px;
    background: #fff;
    box-shadow: 0 0 3px rgba(60, 64, 67, 0.3);
    color: #000;
}

.doc-h {
    margin: 0;
    font-size: 48px;
    font-weight: 700;
    line-height: 54px;
}

.doc-h2 {
    margin-top: 53px;
}

.doc-grid {
    display: grid;
    grid-template-columns: 768px 192px 1fr;
    margin-top: 49px;
    font-size: 29.330px;
    line-height: 40px;
}

.cursor-cell {
    position: relative;
}

.cursor {
    position: absolute;
    left: 90px;
    top: 5px;
    width: 3px;
    height: 36px;
    background: #000;
}

.scrollthumb {
    position: absolute;
    right: 9px;
    top: 8px;
    width: 16px;
    height: 785px;
    border-radius: 8px;
    background: #dadce0;
}

.tip-btn {
    position: absolute;
    right: 35px;
    bottom: 16px;
    width: 72px;
    height: 73px;
    border-radius: 4px;
    background: #f8f8f8;
    box-shadow: 0 0 3px rgba(0, 0, 0, 0.4);
    display: flex;
    align-items: center;
    justify-content: center;
}

.tip-btn svg {
    width: 36px;
    height: 42px;
    margin-top: 8px;
    fill: #757575;
}

/* side panel */
.sidepanel {
    width: 111px;
    flex: none;
    box-sizing: border-box;
    border-left: 2px solid #dadce0;
    background: #fff;
    display: flex;
    flex-direction: column;
    align-items: flex-start;
    padding: 37px 0 0 36px;
    position: relative;
}

.side-ic {
    width: 38px;
    height: 38px;
    flex: none;
    margin-bottom: 74px;
}

.cal-num {
    font-family: Roboto, sans-serif;
    font-size: 16px;
    font-weight: 500;
    fill: #4285f4;
    text-anchor: middle;
}

.side-rule {
    width: 40px;
    height: 2px;
    margin: -4px 0 0 -2px;
    background: #dadce0;
}

.side-plus {
    width: 24px;
    height: 24px;
    margin: 75px 0 0 7px;
    fill: none;
    stroke: #80868b;
    stroke-width: 2.500;
}

.side-chev {
    position: absolute;
    left: 47px;
    bottom: 46px;
    width: 14px;
    height: 20px;
    fill: none;
    stroke: #5f6368;
    stroke-width: 3.500;
}
```
